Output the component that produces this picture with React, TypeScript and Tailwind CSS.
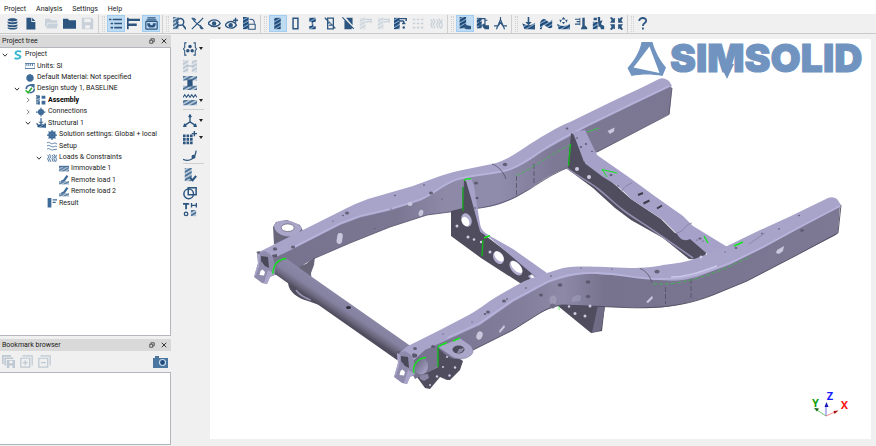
import type { ReactNode } from "react";

const H = "url(#hatch)";

// 16x16 drawings, painted with currentColor
const icons: Record<string, ReactNode> = {
  database: (
    <g fill="currentColor">
      <path d="M2 3.500C2 .8 14 .8 14 3.500S2 6.200 2 3.500z" />
      <path d="M2 5.200C4 7 12 7 14 5.200v2.200C13 9.500 3 9.500 2 7.400zM2 8.800c2 1.800 10 1.800 12 0V11c-1 2.100-11 2.100-12 0zM2 12.300c2 1.800 10 1.800 12 0v1.200c-1 2.600-11 2.600-12 0z" />
    </g>
  ),
  file: <path fill="currentColor" d="M3 1h6v5h5v9.500H3zM10 1l4 4h-4z" />,
  folderOpen: <path fill="currentColor" d="M0 2h6l2 2h7v3H3l-1.500 5H0zM3.500 8H16l-1.500 6H1.500z" />,
  folder: <path fill="currentColor" d="M0 2h6l1.500 2H16v10.500H0z" />,
  save: <path fill="currentColor" fillRule="evenodd" d="M1 1h12l2 2v12H1zm3 1v4.500h8V2zm1 8v4h6v-4z" />,
  list: <path fill="currentColor" d="M0 2h3v2H0zm4.500 0H16v2H4.500zM2 7h3v2H2zm4.500 0H16v2H6.500zM2 12h3v2H2zm4.500 0H16v2H6.500z" />,
  flag: <path fill="currentColor" d="M0 1h2v14H0zM2 2h14v3H2zM2 8h10v3H2z" />,
  drawer: (
    <g fill="none" stroke="currentColor" strokeWidth="1.500">
      <path d="M3 1h10M2 3.500h12" />
      <rect x="1" y="5.500" width="14" height="9.500" rx="1" />
      <path fill="currentColor" d="M3.500 8.500h2c0 3 5 3 5 0h2c0 5-9 5-9 0z" />
    </g>
  ),
  search: (
    <>
      <path fill={H} d="M0 0h7v15H0z" />
      <circle cx="9" cy="6" r="4.200" fill="none" stroke="currentColor" strokeWidth="1.800" />
      <path d="M6 10l-2 4M12 9.500l4 5.500" stroke="currentColor" strokeWidth="2" />
    </>
  ),
  cut: <path fill="none" stroke="currentColor" strokeWidth="1.500" d="M1 1l4 5M11 10l4 5M15 1L9.500 7M6 10l-5 5M5 6l6 5M5 11l6-6M3 1l3 3M13 15l-2-3" />,
  eye: (
    <>
      <path fill="none" stroke="currentColor" strokeWidth="1.700" d="M0 8c4-6 12-6 15 0-3 5-11 5-15 0z" />
      <circle cx="7.500" cy="8" r="2.700" fill="currentColor" />
      <path d="M11.500 13H16l-2.200 2.500z" fill="#000" />
    </>
  ),
  eyePlus: (
    <>
      <path fill="none" stroke="currentColor" strokeWidth="1.700" d="M0 10c4-6 11-6 14 0-3 5-10 5-14 0z" />
      <circle cx="7" cy="10" r="2.700" fill="currentColor" />
      <path d="M13 1v6M10 4h6" stroke="currentColor" strokeWidth="1.700" />
    </>
  ),
  rotate: (
    <>
      <path fill="url(#hatchDark)" d="M0 0h7v15H0z" />
      <path fill="none" stroke="currentColor" strokeWidth="1.300" d="M7 9h8v6H7zM8 3c4-1 6 1 6 5" />
    </>
  ),
  bar: <path fill="url(#hatchDark)" d="M4 1h8v14H4z" />,
  frame: <path fill="none" stroke="currentColor" strokeWidth="1.800" d="M5 1.500h6v13H5z" />,
  barPart: <path fill="url(#hatchDark)" d="M4 1h8v5H9v5h3v4H4v-4h3V6H4z" />,
  barSlash: (
    <>
      <path fill="none" stroke="currentColor" strokeWidth="1.600" d="M4.500 1.500h7v13h-7zM1 1l13 13" />
      <path fill={H} d="M5 5l6 6H5z" />
    </>
  ),
  barHalf: <path fill="currentColor" d="M3 4l9 9v2H3zM5 1h8v9zM1 0l14 14-1 1L0 1z" />,
  beam: (
    <>
      <path fill={H} d="M1 1h7v14H1z" />
      <path fill="none" stroke="currentColor" strokeWidth="1.600" d="M8 3h7v4M9 7c1-2 3-2 5-1" />
    </>
  ),
  beamPin: (
    <>
      <path fill="url(#hatchDark)" d="M0 1h7v14H0z" />
      <path fill="none" stroke="currentColor" strokeWidth="1.800" d="M6 2h9v3M6 5h6M12 5v4M10 8h4" />
      <circle cx="12" cy="13" r="1.500" fill="currentColor" />
    </>
  ),
  grid: <path fill="currentColor" d="M1 2h3v2H1zm5 0h3v2H6zm5 0h3v2h-3zM1 7h3v2H1zm5 0h3v2H6zm5 0h3v2h-3zM1 12h3v2H1zm5 0h3v2H6zm5 0h3v2h-3z" />,
  springs: <path fill="none" stroke="currentColor" strokeWidth="1.500" d="M1 3l2 3-2 3 2 5M4 2l2 4-2 3 2 5M8 3l2 3-2 3 2 5M11 2l2 4-2 3 2 5M15 3l-1 4 1 3-1 4" />,
  pick: (
    <>
      <path fill="url(#hatchDark)" d="M2 0h8v14H2z" />
      <path fill="currentColor" d="M8 8l3 2 5 1v4h-6l-3-3z" />
    </>
  ),
  pickBox: (
    <>
      <path fill="url(#hatchDark)" d="M1 1h6v13H1z" />
      <path fill="none" stroke="currentColor" strokeWidth="1.500" d="M4 2h7v8H4zM11 4h3" />
      <path fill="currentColor" d="M9 8l3 2h4v5h-5l-3-3z" />
    </>
  ),
  compass: <path fill="none" stroke="currentColor" strokeWidth="1.400" d="M8 0v4M8 3L3 15M8 3l5 12M0 11h5l3-4 3 4h5" />,
  load: (
    <>
      <path fill="url(#hatchDark)" d="M0 7c4 4 12 4 16 0v8H3z" />
      <path fill="currentColor" d="M7 0h2v6h3l-4 4-4-4h3zM13 11h3v4h-5z" />
    </>
  ),
  deform: <path fill="url(#hatchDark)" d="M0 7c3-6 6-5 9-2 2 2 4 1 6-2v10c-3 2-6 0-8-2-3-3-4 0-5 4H0z" />,
  contact: (
    <>
      <path fill="url(#hatchDark)" d="M0 8c4 4 12 4 16 0v7H2z" />
      <path fill="currentColor" d="M8 0l2.500 3h-5zM3 3l3 1-2 3zM13 3l-3 1 2 3zM8 9L6 6h4z" />
    </>
  ),
  thermal: (
    <>
      <path fill="currentColor" d="M0 2h6v1.500H0zM2 5h4v1.500H2zM0 8h6v1.500H0zM9 1h3v9l3 3v2H7l2-4z" />
      <path d="M6 1v9" stroke="currentColor" />
    </>
  ),
  fatigue: (
    <>
      <path fill="url(#hatchDark)" d="M1 6h6v9H1z" />
      <path fill="currentColor" d="M2 1h4v3H2zM7 0h3v5l3-1-2 5 4 2v4h-4l-1-3H8z" />
    </>
  ),
  fit: (
    <path fill="currentColor" d="M0 1l2-1 2 2 2-1v6H0l2-3zM16 1l-2-1-2 2-2-1v6h6l-2-3zM0 15l2 1 2-2 2 1V9H0l2 3zM16 15l-2 1-2-2-2 1V9h6l-2 3z" />
  ),
  help: <path fill="none" stroke="currentColor" strokeWidth="2.200" d="M4 5c0-5 9-5 8.500 0C12.300 7.500 8.500 7.500 8.500 11M8.500 13v2.500" />,
  braces: (
    <>
      <path fill="none" stroke="currentColor" strokeWidth="1.200" d="M4 1H2v5L.5 8 2 10v5h2M12 1h2v5l1.500 2-1.500 2v5h-2" />
      <circle cx="8" cy="5" r="2" fill="currentColor" />
      <circle cx="5.500" cy="10" r="2" fill="currentColor" />
      <circle cx="10.500" cy="10" r="2" fill="currentColor" />
    </>
  ),
  pair: (
    <>
      <path fill={H} d="M0 1h6v14H0zM10 1h6v14h-6z" />
      <path stroke="currentColor" strokeWidth="1.500" d="M4 8h8" />
    </>
  ),
  ibeam: (
    <>
      <path fill={H} d="M0 0h16v5H0zM0 11h16v5H0z" />
      <path fill="currentColor" d="M5 4h6v8H5z" />
    </>
  ),
  ground: (
    <>
      <path fill={H} d="M0 8h16v6H0z" />
      <path fill="none" stroke="currentColor" strokeWidth="1.200" d="M0 5l2-3 2 3 2-3 2 3 2-3 2 3 2-3 2 3" />
    </>
  ),
  axes: <path fill="none" stroke="currentColor" strokeWidth="1.500" d="M8 2v7M8 9l-6 4M8 9l6 4M6.500 3.500L8 1l1.500 2.500M2 11l-1 3h3M14 11l1 3h-3" />,
  gridPlus: (
    <>
      <path fill="currentColor" d="M0 4h3v3H0zm4 0h3v3H4zm4 0h3v3H8zM0 8h3v3H0zm4 0h3v3H4zm4 0h3v3H8zM0 12h3v3H0zm4 0h3v3H4zm4 0h3v3H8z" />
      <path d="M13 0v6M10 3h6" stroke="currentColor" strokeWidth="1.600" />
    </>
  ),
  curve: (
    <>
      <path fill="none" stroke="currentColor" strokeWidth="1.400" d="M0 13c8 3 14-1 15-10" />
      <circle cx="12" cy="10" r="2.300" fill="currentColor" />
    </>
  ),
  barCheck: (
    <>
      <path fill={H} d="M2 0h8v15H2z" />
      <path fill="none" stroke="currentColor" strokeWidth="2.400" d="M8 11l3 3 4-5" />
    </>
  ),
  shapes: (
    <g fill="none" stroke="currentColor" strokeWidth="1.700">
      <circle cx="6.500" cy="9" r="5.500" />
      <path d="M6 2h9v8H6z" />
    </g>
  ),
  tools: (
    <>
      <path fill="currentColor" d="M0 0h7v2H4.500v5h-2V2H0zM9 0h1.500v2h4V0H16v5h-1.500V3.500h-4V5H9z" />
      <circle cx="3.500" cy="12.500" r="2" fill="none" stroke="currentColor" strokeWidth="1.500" />
      <path fill={H} d="M9 8h6v7H9z" />
    </>
  ),
  logoS: <path fill="none" stroke="#35b6cf" strokeWidth="3" d="M13 2.500C8 1 3.500 2.500 4 5.500S12.500 8 12 11 6 14.500 2.500 13" />,
  ruler: <path fill="none" stroke="currentColor" strokeWidth="1.300" d="M0 4h16v8H0zM3 4v4M6 4v4M9 4v4M12 4v4" />,
  material: <path fill="currentColor" stroke="currentColor" strokeWidth="1.500" strokeDasharray="2 1.500" d="M8 2.500a5.500 5.500 0 1 1 0 11 5.500 5.500 0 1 1 0-11z" />,
  study: (
    <>
      <path fill="none" stroke="currentColor" strokeWidth="2.600" d="M2 8c0-6 7-8 11-4M15 7c0 5-4 7-8 7M9 1h5v5" />
      <path fill="none" stroke="#2fb32f" strokeWidth="2.600" d="M1 10l4 4 6-8" />
    </>
  ),
  assembly: (
    <>
      <path fill={H} d="M0 0h6v15H0z" />
      <path fill="currentColor" d="M2 1h4v4H2zM9 1h6v5H9zM9 9h6v6H9zM3 10h3v5H3z" />
    </>
  ),
  connections: (
    <>
      <circle cx="8" cy="8" r="5" fill="currentColor" />
      <path d="M0 8h16M8 1v14" stroke="currentColor" strokeWidth="2" strokeDasharray="3 1" />
    </>
  ),
  gear: (
    <>
      <circle cx="8" cy="8" r="4.500" fill="none" stroke="currentColor" strokeWidth="3" />
      <path stroke="currentColor" strokeWidth="2" d="M8 0v16M0 8h16M2.500 2.500l11 11M13.500 2.500l-11 11" />
    </>
  ),
  setup: <path fill="none" stroke="currentColor" strokeWidth="1.300" d="M0 3c4-3 6 3 10 1 2-1 4-1 6 1M0 8c4-3 7 3 11 1 2-1 3-1 5 0M0 13c4-3 6 3 10 1l6-1" />,
  remote: (
    <>
      <path fill={H} d="M0 10h16v5H0z" />
      <path fill="currentColor" d="M3 9l4-2 5-7 3 2-5 7-6 2z" />
    </>
  ),
  immovable: (
    <>
      <path fill={H} d="M0 3h16v9H0z" />
      <path fill="currentColor" d="M0 3h16v1.500H0z" />
    </>
  ),
  result: <path fill="currentColor" d="M1 0h6v15H1zM9 2h7v2H9zM9 6h5v2H9z" />,
  bookmarks: <path fill="currentColor" fillRule="evenodd" d="M0 0h11v2H2v9H0zM3 3h11v2H5v8H3zM6 6h10v10H6zm3 1v3h4V7zm0 6v3h4v-3z" />,
  expand: <path fill="none" stroke="currentColor" strokeWidth="1.500" d="M3 1h12v12M1 4h11v11H1zM3.500 9.500h6M6.500 6.500v6" />,
  collapse: <path fill="none" stroke="currentColor" strokeWidth="1.500" d="M3 1h12v12M1 4h11v11H1zM3.500 9.500h6" />,
  float: <path fill="none" stroke="currentColor" strokeWidth="2" d="M5 6V2h9v8h-4M2 6h8v8H2z" />,
  close: <path stroke="currentColor" strokeWidth="2.600" d="M2 2l12 12M14 2L2 14" />,
};

function Icon({ name, className = "size-[13px]" }: { name: string; className?: string }) {
  return (
    <svg viewBox="0 0 16 16" className={`shrink-0 ${className}`} aria-hidden="true">
      {icons[name]}
    </svg>
  );
}

function ToolGroup({ names, className, active = [], disabled = [] }: { names: string[]; className: string; active?: string[]; disabled?: number[] }) {
  return (
    <div className={`flex h-[17px] ${className}`}>
      {names.map((name, i) => (
        <button
          key={i}
          aria-label={name}
          disabled={disabled.includes(i)}
          className={`flex flex-1 items-center justify-center disabled:opacity-20 ${active.includes(name) ? "bg-[#bfdcf3] outline outline-1 -outline-offset-1 outline-[#a3cdf0]" : ""}`}
        >
          <Icon name={name} />
        </button>
      ))}
    </div>
  );
}

function Grip() {
  return (
    <div className="flex h-[18px] w-[11px] shrink-0 items-center gap-[3px] pl-0.5">
      <span className="h-full w-px bg-[#cfcfcf]" />
      <span className="h-4 w-[3px] border-x border-dotted border-[#d2d2d2]" />
    </div>
  );
}

function PanelTitle({ title }: { title: string }) {
  return (
    <div className="flex h-3 items-center bg-[#d9d9d9] pr-1 pl-0.5">
      <h2 className="flex-1">{title}</h2>
      <button aria-label={`Float ${title}`} className="mr-[6px] text-[#333]"><Icon name="float" className="size-1.5" /></button>
      <button aria-label={`Close ${title}`} className="text-[#333]"><Icon name="close" className="size-1.5" /></button>
    </div>
  );
}

const tree = [
  { label: "Project", icon: "logoS", pad: "pl-0", arrow: "open" },
  { label: "Units: SI", icon: "ruler", pad: "pl-3", arrow: "" },
  { label: "Default Material: Not specified", icon: "material", pad: "pl-3", arrow: "" },
  { label: "Design study 1, BASELINE", icon: "study", pad: "pl-3", arrow: "open" },
  { label: "Assembly", icon: "assembly", pad: "pl-[23px]", arrow: "closed", bold: true },
  { label: "Connections", icon: "connections", pad: "pl-[23px]", arrow: "closed" },
  { label: "Structural 1", icon: "load", pad: "pl-[23px]", arrow: "open" },
  { label: "Solution settings: Global + local", icon: "gear", pad: "pl-[34px]", arrow: "" },
  { label: "Setup", icon: "setup", pad: "pl-[34px]", arrow: "" },
  { label: "Loads & Constraints", icon: "springs", pad: "pl-[34px]", arrow: "open" },
  { label: "Immovable 1", icon: "immovable", pad: "pl-[46px]", arrow: "" },
  { label: "Remote load 1", icon: "remote", pad: "pl-[46px]", arrow: "" },
  { label: "Remote load 2", icon: "remote", pad: "pl-[46px]", arrow: "" },
  { label: "Result", icon: "result", pad: "pl-[34px]", arrow: "" },
];

const sideTools = [
  { name: "braces", h: "h-[17px]", menu: true },
  { name: "pair", h: "h-[17px]", off: true },
  { name: "ibeam", h: "h-[17px]" },
  { name: "ground", h: "h-[18px]", menu: true, line: true },
  { name: "axes", h: "h-[17px]", menu: true },
  { name: "gridPlus", h: "h-[17px]", menu: true },
  { name: "curve", h: "h-[17px]", line: true },
  { name: "barCheck", h: "h-[18px]" },
  { name: "shapes", h: "h-[17px]" },
  { name: "tools", h: "h-[17px]" },
];

// Mounting horn at the front end of each rail
function Horn() {
  return (
    <>
      <path fill="#8f8bad" d="M257 253l8-2 6 4 3 6 1 14-5 2-3 7-5-1-8-6 4-14z" />
      <path fill="#aaa6ca" d="M257 253l3 2-1 11-3 9-2 2 4-14zM268 270l7 4-5 3-3 7-3-1z" />
      <path fill="#4b4859" d="M261 256l7 1 1 11-4-2-4-5z" />
      <path fill="#5b586c" d="M256 252l4-1-1 3zM272 255l5-1v3l-4 1z" />
      <path fill="#fff" d="M260.500 271l2-1.500 2.500 2.500-1 3.500-4.500-.5z" />
    </>
  );
}

const SMALL_HOLES: [number, number, number][] = [
  [395, 195.500, 1], [424, 185, 1], [431, 193, 2], [442, 199, 0.8], [347, 213, 2], [343, 215.500, 1], [333, 221, 0.8],
  [375, 228.500, 0.8], [391, 209, 0.8], [293, 247, 2], [275, 249, 2.200], [567, 128.500, 1.300], [505, 164.500, 2.300],
  [577, 138, 1], [581, 147, 1.200], [586, 144, 1.200], [592, 151.500, 1], [611, 175, 1.500], [618, 186, 1], [443, 334, 0.8],
  [433, 346.500, 2], [415, 348.500, 2], [414, 354.500, 1.800], [472, 322, 0.8], [488, 312, 2], [485, 314, 1.300], [504, 301, 2],
  [507, 299, 1], [526, 288, 1], [551, 276, 1], [541, 295, 2], [560, 285, 2.400], [588, 282, 2.400], [588, 296.500, 2.200],
  [581, 268, 0.8], [612, 269, 0.8], [657, 271.500, 2.500], [736, 248, 1.400], [725, 252, 0.8], [762, 233.500, 1], [779, 229, 1],
  [799, 215.500, 1], [802, 230.500, 1.800], [476, 183, 2], [477, 198, 1.600], [475, 208, 1], [700, 238.500, 1.500], [697, 240, 0.8], [703, 241, 0.8],
];

const LIGHT_HOLES: [number, number, number][] = [
  [457, 226, 1.500], [468, 237, 1.500], [474, 239.500, 1.300], [481, 242, 1.200], [490, 252, 1.500], [577, 169, 2], [589, 177, 2],
  [569, 306.500, 1.200], [575, 313.500, 1.500], [585, 316, 1.500], [590, 306, 1.500], [443, 367, 1], [455, 367.500, 1.200], [449.500, 375.500, 1.200],
  [430, 385, 1], [437, 376.500, 1.200], [447, 357, 1], [701, 257, 1.500],
];

function TruckFrame() {
  return (
    <g strokeLinejoin="round">
      {/* brackets behind the far rail */}
      <path fill="#6a677d" d="M273 227l3-5 11-2 13 5 5 10-24 12-7-3z" />
      <path fill="#aaa6ca" d="M274 226c2-8 21-7 28 2l-4 6c-7 5-23 2-24-8z" />
      <ellipse cx="287.700" cy="227.700" rx="6.500" ry="3.800" fill="#fff" stroke="#615e72" strokeWidth=".7" />
      <path fill="#686579" d="M298 266l8-2 9-8-1 9-3 8 1 15-14-9z" />
      <path fill="#504d5e" d="M288 283c1 9 9 15 20 18l14 5 2-9-24-20z" />
      <path fill="none" stroke="#9a96b6" strokeWidth="1.500" d="M296 290c4 6 9 8 15 10" />

      {/* rear cross member */}
      <path fill="#504d5e" d="M571 134l13 27 19 13 19 17 9 8 30 20 14 14 10 1 22 17-4 9-14-1-26-21-32-18-16-12-22-20-27-20z" />
      <path fill="none" stroke="#928eae" strokeWidth="1.600" d="M567 168c10 8 21 13 30 20s17 15 26 22 25 16 37 25l33 23" />
      <path fill="#a5a1c8" d="M572 132l13-1 12 24 33 23 26 19 27 19 10 10 36 22-17 10-22-19c-6 3-10 0-13-5l-14-14-32-21c-7-8-14-14-28-22l-20-15z" />
      <path fill="none" stroke="#7c7895" strokeWidth=".7" d="M621 192c3-5 6-7 11-9M677 233c8-2 8-9 15-10" />
      <path stroke="#3e3b4a" strokeWidth="2" d="M638 195l5-2M643.500 203.500l6-3M657 208.500l5-3" />

      {/* far rail */}
      <path fill="url(#side)" d="M262 255L293 247 340 224 360 216 390 209 420 200C435 193 446 182 463 178L497 172C520 166 530 158 540 151L563 138 587 125 670 86 672 88 669.500 114 567 168C545 176 530 190 517 197 500 205 490 207 480 208L450 212 427 215 390 227 350 243 313 259 298 268 275 275z" />
      <path fill="#a7a3c9" d="M257 253L273 245 307 228 340 211.500C350 206 360 202 368 199L413 186C425 182 440 175 460 170.500L492 164C508 160 518 152 530 144 545 135 555 128 570 122L613 101 643 87 659 79Q664 77 669 81L672 86 630 106 587 127 563 140 540 153C530 160 520 168 497 173.500 480 176 465 177 455 181 440 188 435 194 420 201L390 210.500 360 217.500 340 225 293 249 272 259z" />
      <path fill="none" stroke="#b7b3db" strokeWidth="1.700" d="M295 246.500L340 223.500 360 216 390 209 420 199.500C435 193 440 186 455 180 470 174 500 174 512 168.500 530 161 538 151 563 138L587 125.500 669 86" />
      <path fill="none" stroke="#55526a" strokeWidth=".8" d="M313 259L350 243 390 227 427 215 450 212 480 208C505 204 515 197 530 189 545 179 555 173 567 168M597 152L669 114.500 672 88" />

      {/* tower bracket of the rear cross member */}
      <path fill="#504d5e" d="M571 133l2 1 12 28-2 12-15-7z" />
      <path fill="#a5a1c8" d="M573 132l12-2 12 25-1 1-12 6z" />

      {/* front cross member */}
      <path fill="#504d5e" d="M451 211l12-3 1-28 6 0 10 48 6 8 54 41-17 8-42-27-30-22z" />
      <path fill="#a5a1c8" d="M465 179l6-1 3 8 6 38c1 6 5 9 10 12l23 13 34 24-10 5-47-40c-7-4-12-7-14-12z" />
      <path fill="#504d5e" d="M464 182l2-1 5 17 10 37 4 6-21-28z" />
      <g fill="#b3afd0">
        <ellipse cx="466.500" cy="220" rx="5" ry="7" transform="rotate(-20 466.500 220)" />
        <ellipse cx="498.500" cy="257.500" rx="5" ry="7" transform="rotate(-30 498.500 257.500)" />
        <ellipse cx="516" cy="268" rx="5" ry="8.500" transform="rotate(-38 516 268)" />
        <path d="M528 276l4-2 6 5-6 2z" />
      </g>
      <g fill="#fff">
        <ellipse cx="465.500" cy="221.500" rx="3.500" ry="5" transform="rotate(-30 465.500 221.500)" />
        <ellipse cx="499" cy="256.500" rx="3.500" ry="6" transform="rotate(-40 499 256.500)" />
        <ellipse cx="516.500" cy="267" rx="3.500" ry="7.500" transform="rotate(-44 516.500 267)" />
        <path d="M530 276l2-1 4 4-3 0z" />
      </g>
      <path fill="#504d5e" d="M558 306l10-4 37 3-3 26-11 2z" />
      <path fill="#706c86" d="M598 305l7 2-4 23-9 3z" />

      {/* lower bracket of the near rail */}
      <path fill="#504d5e" d="M417 377l21-10 1-22 24 16-3 9-10 10-3 0-7-3-10 12-5-1z" />
      <path fill="#8a86a4" d="M419 375l9-1 1 4-5 3-4-2zM442 372l6-5 1 2-6 4z" />

      {/* tube */}
      <path fill="url(#tube)" d="M275 274Q275 262 287 259L312 277 412 347 397 360 320 306z" />
      <ellipse cx="348.500" cy="307.500" rx="2.500" ry="1.500" fill="#2f2d3a" />

      {/* near rail */}
      <path fill="url(#sideNear)" d="M402 355L430 347 447 338 480 323 513 300 547 282C560 275 580 272 597 272.500L630 275 663 279C680 279 690 277 697 275L730 263 763 247 797 228 840 206 838 231Q838 234 834 236L797 255 747 281 713 295C685 305 665 308 647 308L613 307 563 305C552 307 545 311 540 313L513 330 473 350 438 367 415 379z" />
      <path fill="#a7a3c9" d="M397 355L407 346.500 440 330 463 318C478 311 486 303 497 296.500 510 289 520 283 527 280L547 273 563 268C580 265 600 267 630 268 645 268 655 267 663 265 680 263 690 261 697 258L723 248 757 231.500 790 216.500 828 198Q833 196 837 199L841 205 797 229.500 763 248 730 264.500 697 277C680 282 665 282 630 276L597 274C580 273 565 277 547 283.500L513 302 480 325 447 340 425 350 414 360z" />
      <path fill="none" stroke="#b7b3db" strokeWidth="1.800" d="M447 338L480 323 513 300 547 282C565 274 580 272.500 597 273 625 274 640 280 663 279 685 279 700 275 730 263L763 247 797 228.500 840 206" />
      <path fill="none" stroke="#dedaf8" strokeWidth="1.500" d="M671 277c14 0 27-4 46-11" opacity=".7" />
      <path fill="none" stroke="#4c495c" strokeWidth=".9" d="M473 350L513 330 540 313C550 307 558 305 563 305L613 307C650 309 680 308 713 295L747 281 797 255 838 233 841 205" />

      <Horn />
      <g transform="translate(140 100)"><Horn /></g>
      <ellipse cx="421" cy="366" rx="7" ry="8.500" fill="url(#bore)" />

      {/* ear of the near bracket */}
      <path fill="#504d5e" d="M438 348l9 8 14 6-5 9-6 7-12-8z" />
      <path fill="#aaa6ca" stroke="#757190" strokeWidth=".5" d="M438 347l22-9 10 7c5 5 4 10-4 13-6 2-11 1-15-2z" />
      <ellipse cx="458.500" cy="349.500" rx="6" ry="4" fill="#4d4a5b" />
      <path fill="#8d89a8" d="M459 349l5-1c-1 4-3 5-7 5z" />

      {/* slots */}
      <g fill="#c9c7de">
        <rect x="337" y="233" width="5.500" height="11" rx="2.700" transform="rotate(8 340 238)" />
        <ellipse cx="421" cy="213" rx="2.200" ry="3.200" transform="rotate(20 421 213)" />
        <ellipse cx="410" cy="204" rx="2.500" ry="2" />
        <path d="M607.500 131l7-3.500-.5 4-4 2.500z" />
        <path d="M777 250l7-4-1 5-4 3-3-1z" />
        <path d="M646 302l6-6 1 2-5 5zM499 331l5-6 1 2-5 6z" />
        <ellipse cx="479.500" cy="335.500" rx="3" ry="4.200" transform="rotate(20 479.500 335.500)" />
        <ellipse cx="553" cy="300" rx="3.500" ry="4.500" opacity=".3" />
        <path d="M572 298q5-5 9-2l-1 5-8 1z" opacity=".25" />
      </g>
      <circle cx="552.500" cy="306" r="2.500" fill="#706d86" />
      {SMALL_HOLES.map(([x, y, r], i) => (
        <ellipse key={i} cx={x} cy={y} rx={r} ry={r * 0.75} fill="#575469" opacity=".85" />
      ))}
      {LIGHT_HOLES.map(([x, y, r], i) => (
        <circle key={i} cx={x} cy={y} r={r} fill="#cfcce2" />
      ))}

      {/* seams */}
      <g fill="none" stroke="#4c495c" strokeWidth=".7">
        <path d="M492 164c6 2 11 7 14 15M640 268.500c6 2 10 8 12 14" />
        <path strokeDasharray="5 2" d="M516.500 176v20M534 164v21M665.500 287v17M691 279v20" />
        <path d="M749 244l16-11M603 183v8" opacity=".4" />
      </g>

      {/* weld lines */}
      <g fill="none" stroke="#14e61e" strokeWidth="1.400">
        <path d="M273 274c0-9 5-15 13-15.500M414 373c-2-8 4-15 12-15.500" />
        <path d="M463 187v24" stroke="#0f9d18" />
        <path d="M464 180.500c2-2 4-2 7-1.500M484 238l6-2.500M438 346.500l9-4M453 341l7-3" />
        <path d="M438 347v20M483 240l-1 16M570.500 144l-2 22" stroke="#12b81c" />
        <path d="M602 169.500l15 3.500M602 169l5 8" strokeWidth="1" />
        <path d="M734 246l9-4M704 236l4 7" />
        <path d="M516 176c20-10 35-22 54-31M653 284h12c25-1 55-12 86-28" strokeWidth=".7" strokeDasharray="4 2" opacity=".7" />
        <path d="M559 306v4M587 132l12-4" strokeWidth=".6" />
      </g>
    </g>
  );
}

function Viewport() {
  return (
    <svg viewBox="210 39 661 400" className="h-full w-full overflow-visible" role="img" aria-label="Truck frame model">
      <defs>
        <linearGradient id="side" gradientUnits="userSpaceOnUse" x1="280" y1="0" x2="672" y2="0">
          <stop offset="0" stopColor="#77738f" />
          <stop offset=".3" stopColor="#7b7793" />
          <stop offset=".42" stopColor="#8d89a7" />
          <stop offset=".56" stopColor="#8f8bab" />
          <stop offset=".7" stopColor="#7d7995" />
          <stop offset="1" stopColor="#7b7792" />
        </linearGradient>
        <linearGradient id="sideNear" gradientUnits="userSpaceOnUse" x1="420" y1="0" x2="840" y2="0">
          <stop offset="0" stopColor="#77738f" />
          <stop offset=".25" stopColor="#827e9b" />
          <stop offset=".34" stopColor="#8d89a7" />
          <stop offset=".44" stopColor="#77738e" />
          <stop offset=".65" stopColor="#797590" />
          <stop offset="1" stopColor="#7d7995" />
        </linearGradient>
        <linearGradient id="bore" x1="0" y1="0" x2="1" y2="1">
          <stop offset="0" stopColor="#5f5c72" />
          <stop offset=".6" stopColor="#8f8bab" />
          <stop offset="1" stopColor="#b5b1d6" />
        </linearGradient>
        <linearGradient id="tube" gradientUnits="userSpaceOnUse" x1="340" y1="297" x2="330" y2="312">
          <stop offset="0" stopColor="#8a86a6" />
          <stop offset=".45" stopColor="#8581a0" />
          <stop offset=".75" stopColor="#6b687e" />
          <stop offset="1" stopColor="#4f4c5e" />
        </linearGradient>
      </defs>

      <TruckFrame />

      {/* brand */}
      <g fill="#7093c0">
        <path fillRule="evenodd" d="M641.500 42h11c2 8 7 18 13.500 25.500L662.500 76c-10-2-21-2-31 0l-4-8c7-8 12-16 14-26zM649.500 46.500l-16 21 26 5.500z" />
        <text x="670" y="72" fontSize="39" fontWeight="900" stroke="#7093c0" strokeWidth="1" className="font-['Inter',sans-serif]">SIMSOLID</text>
        <path d="M720 64h14l-7 15z" />
      </g>

      {/* axis triad */}
      <g fill="none" strokeWidth=".8">
        <path stroke="#4a4ae0" d="M826 416v-10" />
        <path stroke="#f07070" d="M826 416l9-4" />
        <path stroke="#4db34d" d="M826 416l-9-6" />
      </g>
      <path fill="#1515b5" d="M826.500 402l2 5h-4z" />
      <path fill="#a81515" d="M838.500 410.500l-4 3.500-1-3z" />
      <path fill="#116611" d="M814 408l5 .5-2 3z" />
      <g fontSize="11" fontWeight="700" textAnchor="middle" className="font-['Noto_Sans',sans-serif]">
        <text x="830" y="400" fill="#1a1aff">Z</text>
        <text x="815.500" y="407" fill="#0f9f0f">Y</text>
        <text x="844.500" y="409" fill="#ff1a1a">X</text>
      </g>
    </svg>
  );
}

export default function App() {
  return (
    <div className="flex h-screen flex-col bg-[#f0f0f0] font-['Roboto','Noto_Sans',sans-serif] text-[7px] leading-[11px] text-[#1a1a1a]">
      <svg width="0" height="0" className="absolute" aria-hidden="true">
        <defs>
          <pattern id="hatch" width="4" height="4" patternUnits="userSpaceOnUse" patternTransform="rotate(60)">
            <path fill="#b4c5d6" d="M0 0h4v4H0z" />
            <path fill="#4d7399" d="M0 0h2v4H0z" />
          </pattern>
          <pattern id="hatchDark" width="4" height="4" patternUnits="userSpaceOnUse" patternTransform="rotate(60)">
            <path fill="#8facc8" d="M0 0h4v4H0z" />
            <path fill="#1a4878" d="M0 0h2.600v4H0z" />
          </pattern>
        </defs>
      </svg>

      <nav className="flex h-[14px] shrink-0 items-center gap-[10px] bg-white pt-1 pl-1">
        <button>Project</button>
        <button>Analysis</button>
        <button>Settings</button>
        <button>Help</button>
      </nav>

      <div className="flex h-5 shrink-0 items-center border-b border-[#cacaca] pl-1 text-[#2c5580]">
        <ToolGroup names={["database", "file"]} className="mr-1 w-[35px]" />
        <ToolGroup names={["folderOpen", "folder", "save"]} className="w-[53px]" disabled={[0, 2]} />
        <Grip />
        <ToolGroup names={["list", "flag", "drawer"]} className="w-[53px]" active={["list", "drawer"]} />
        <Grip />
        <ToolGroup names={["search", "cut", "eye", "eyePlus", "rotate"]} className="w-[87px]" />
        <Grip />
        <ToolGroup
          names={["bar", "frame", "barPart", "barSlash", "barHalf", "beam", "beam", "beamPin", "grid", "springs"]}
          className="w-[176px]"
          active={["bar"]}
          disabled={[5, 6, 8, 9]}
        />
        <Grip />
        <ToolGroup names={["pick", "pickBox", "compass"]} className="w-[53px]" active={["pick"]} />
        <Grip />
        <ToolGroup names={["load", "deform", "contact", "thermal", "fatigue", "fit"]} className="w-[105px]" />
        <Grip />
        <ToolGroup names={["help"]} className="w-3" />
      </div>

      <div className="flex min-h-0 flex-1">
        <aside className="flex w-[171px] shrink-0 flex-col pt-px">
          <PanelTitle title="Project tree" />
          <div className="flex-1 border border-l-0 border-[#b4b6bd] bg-white">
            <ul role="tree" className="flex h-[161px] flex-col pt-px">
              {tree.map((row) => (
                <li key={row.label} role="treeitem" className={`flex flex-1 items-center ${row.pad}`}>
                  <span className="flex w-2.5 shrink-0 justify-center">
                    {row.arrow && (
                      <svg viewBox="0 0 6 6" className={`size-1.5 ${row.arrow === "closed" ? "-rotate-90" : ""}`} aria-hidden="true">
                        <path fill="none" stroke={row.arrow === "closed" ? "#888" : "#333"} d="M.8 1.800L3 4.200l2.200-2.400" />
                      </svg>
                    )}
                  </span>
                  <span className="flex w-[15px] shrink-0 justify-center text-[#3f6b98]"><Icon name={row.icon} className="size-2.5" /></span>
                  <span className={`whitespace-nowrap ${row.bold ? "font-bold text-black" : ""}`}>{row.label}</span>
                </li>
              ))}
            </ul>
          </div>
          <div className="mt-[3px]">
            <PanelTitle title="Bookmark browser" />
            <div className="flex h-[21px] items-center gap-[5px] pr-[3px] pl-0.5 text-[#2c5580]">
              <button disabled aria-label="Save bookmark" className="opacity-25"><Icon name="bookmarks" className="size-[13px]" /></button>
              <button disabled aria-label="Expand all" className="opacity-25"><Icon name="expand" className="size-[13px]" /></button>
              <button disabled aria-label="Collapse all" className="opacity-25"><Icon name="collapse" className="size-[13px]" /></button>
              <button aria-label="Add bookmark" className="ml-auto">
                <svg viewBox="0 0 15 12" className="h-3 w-[15px]" aria-hidden="true">
                  <path fill="#4b769f" d="M0 2h2V0h4v2h9v10H0z" />
                  <circle cx="9.500" cy="6.500" r="3" fill="#1f4a78" stroke="#c5dcf2" strokeWidth="1.200" />
                </svg>
              </button>
            </div>
            <div className="mb-px h-[73px] border border-l-0 border-[#b4b6bd] bg-white" />
          </div>
        </aside>

        <div className="flex w-[39px] shrink-0 flex-col pt-[6px] pl-3 text-[#2c5580]">
          {sideTools.map((t) => (
            <div key={t.name} className={t.line ? "mb-0.5 w-[21px] border-b border-[#cfcfcf]" : "w-[21px]"}>
              <button aria-label={t.name} disabled={t.off} className={`flex w-full items-center gap-0.5 disabled:opacity-30 ${t.h}`}>
                <Icon name={t.name} className="size-[14px]" />
                {t.menu && <svg viewBox="0 0 4 3" className="h-[3px] w-1 shrink-0" aria-hidden="true"><path fill="#222" d="M0 0h4L2 3z" /></svg>}
              </button>
            </div>
          ))}
        </div>

        <main className="mt-[5px] mr-[5px] mb-[7px] min-w-0 flex-1 bg-white">
          <Viewport />
        </main>
      </div>
    </div>
  );
}
